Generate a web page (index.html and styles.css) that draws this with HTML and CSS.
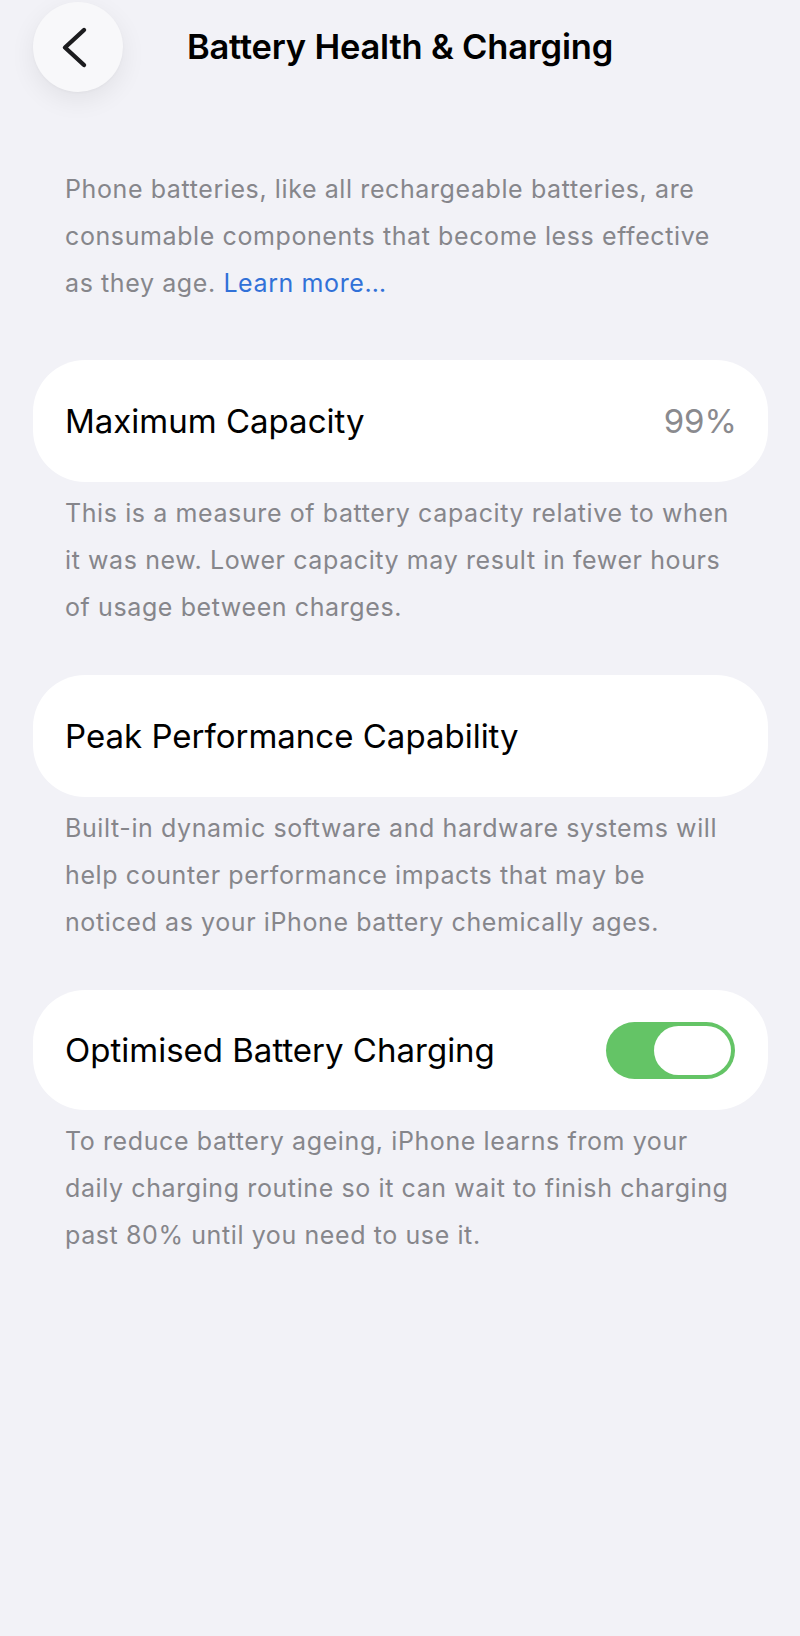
FILE: index.html
```html
<!DOCTYPE html>
<html lang="en">
<head>
<meta charset="utf-8">
<title>Battery Health &amp; Charging</title>
<link rel="stylesheet" href="styles.css">
</head>
<body>
<div class="screen">
  <header class="nav">
    <button class="back" aria-label="Back">
      <svg class="back-icon" viewBox="0 0 90 90" width="90" height="90">
        <path d="M51 28 L32 45.5 L51 63" fill="none" stroke="#1c1c1e" stroke-width="4.4" stroke-linecap="round" stroke-linejoin="round"/>
      </svg>
    </button>
    <h1 class="title">Battery Health &amp; Charging</h1>
    <span class="nav-spacer"></span>
  </header>

  <main class="content">
    <p class="note note--intro">Phone batteries, like all rechargeable batteries, are consumable components that become less effective as they age. <a class="link" href="#">Learn more…</a></p>

    <section class="group">
      <div class="card">
        <span class="card-label">Maximum Capacity</span>
        <span class="card-value">99%</span>
      </div>
      <p class="note">This is a measure of battery capacity relative to when it was new. Lower capacity may result in fewer hours of usage between charges.</p>
    </section>

    <section class="group">
      <div class="card">
        <span class="card-label">Peak Performance Capability</span>
      </div>
      <p class="note">Built-in dynamic software and hardware systems will help counter performance impacts that may be noticed as your iPhone battery chemically ages.</p>
    </section>

    <section class="group">
      <div class="card card--toggle">
        <span class="card-label">Optimised Battery Charging</span>
        <span class="switch" role="switch" aria-checked="true"><span class="switch-knob"></span></span>
      </div>
      <p class="note">To reduce battery ageing, iPhone learns from your daily charging routine so it can wait to finish charging past 80% until you need to use it.</p>
    </section>
  </main>
</div>
</body>
</html>
```

FILE: styles.css
```css
* {
  box-sizing: border-box;
}

html, body {
  margin: 0;
  padding: 0;
  background: #f2f2f7;
}

body {
  font-family: Inter, "Noto Sans", "Liberation Sans", sans-serif;
  color: #000;
  -webkit-font-smoothing: antialiased;
}

.screen {
  width: 800px;
  min-height: 1636px;
  background: #f2f2f7;
}

.nav {
  height: 92px;
  padding-top: 1px;
  display: grid;
  grid-template-columns: 1fr auto 1fr;
  align-items: center;
}

.back {
  margin-left: 33px;
  width: 90px;
  height: 90px;
  border: none;
  padding: 0;
  border-radius: 50%;
  background: #f8f8fa;
  box-shadow: 0 8px 26px rgba(0, 0, 0, 0.07), 0 1px 3px rgba(0, 0, 0, 0.03);
  display: flex;
  align-items: center;
  justify-content: center;
  justify-self: start;
}

.back-icon {
  display: block;
}

.title {
  margin: 0;
  font-size: 34.5px;
  font-weight: 600;
  letter-spacing: -0.2px;
  line-height: 40px;
  text-align: center;
  white-space: nowrap;
}

.content {
  padding: 0 32px 0 33px;
}

.note {
  margin: 0;
  padding: 0 32px 0 32px;
  font-size: 25px;
  letter-spacing: 0.6px;
  line-height: 47px;
  color: #86868b;
}

.note--intro {
  padding-top: 74px;
  margin-bottom: 53px;
}

.link {
  color: #3171d8;
  text-decoration: none;
}

.group {
  display: flex;
  flex-direction: column;
  gap: 8px;
  margin-bottom: 44px;
}

.card {
  height: 122px;
  background: #fff;
  border-radius: 52px;
  padding: 0 31px 0 32px;
  display: flex;
  align-items: center;
  justify-content: space-between;
}

.card--toggle {
  height: 120px;
  padding-right: 33px;
}

.card-label {
  font-size: 33px;
  line-height: 40px;
  color: #000;
  white-space: nowrap;
}

.card-value {
  font-size: 33px;
  line-height: 40px;
  color: #8a8a8e;
}

.switch {
  width: 129px;
  height: 57px;
  border-radius: 29px;
  background: #64c466;
  padding: 4px;
  display: flex;
  justify-content: flex-end;
  align-items: center;
}

.switch-knob {
  width: 77px;
  height: 49px;
  border-radius: 25px;
  background: #fff;
}
```
